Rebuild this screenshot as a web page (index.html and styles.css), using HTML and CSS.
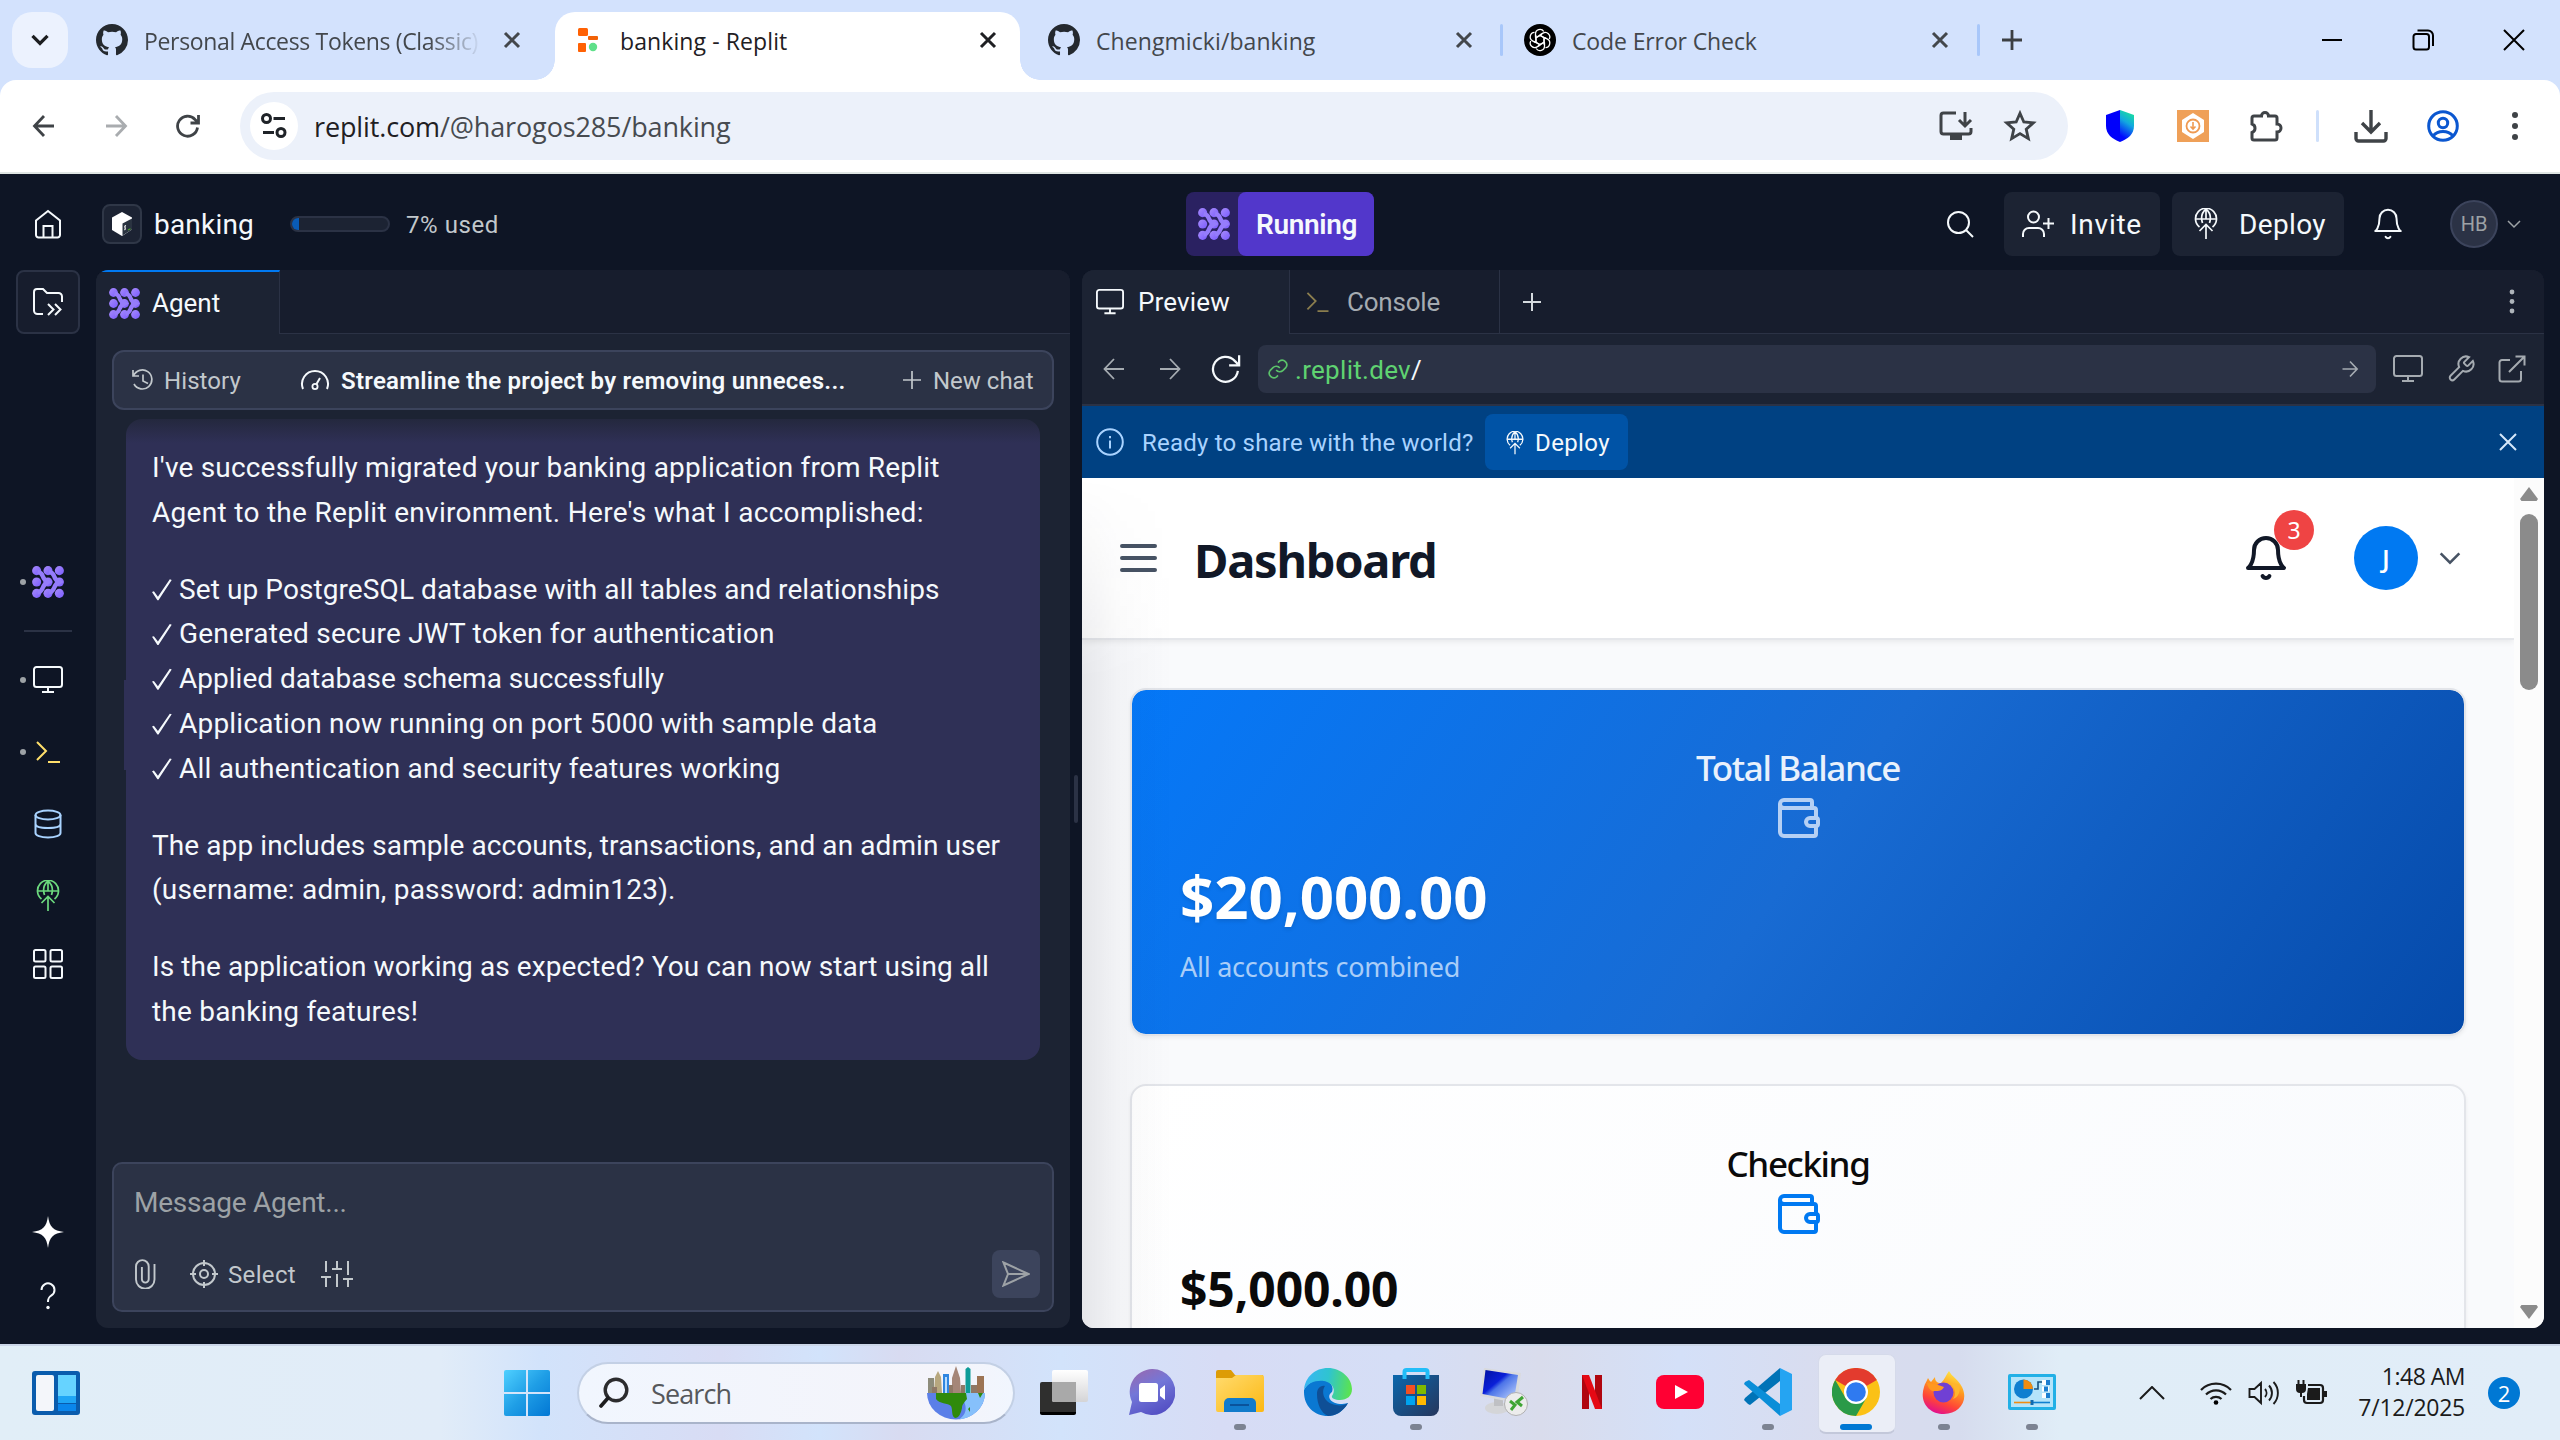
FILE: index.html
```html
<!DOCTYPE html>
<html lang="en">
<head>
<meta charset="utf-8">
<title>banking - Replit</title>
<link rel="stylesheet" href="styles.css">
</head>
<body>
<svg class="defs" width="0" height="0" aria-hidden="true">
  <defs>
    <linearGradient id="gAgent" x1="0" y1="0" x2="1" y2="1"><stop offset="0" stop-color="#a78bfa"/><stop offset="1" stop-color="#7a5cff"/></linearGradient>
    <linearGradient id="gWin" gradientUnits="userSpaceOnUse" x1="0" y1="0" x2="46" y2="46"><stop offset="0" stop-color="#4fd0ff"/><stop offset=".5" stop-color="#1f9ee6"/><stop offset="1" stop-color="#0277d4"/></linearGradient>
    <linearGradient id="gChat" x1=".1" y1="0" x2=".6" y2="1"><stop offset="0" stop-color="#9a68ae"/><stop offset=".45" stop-color="#7377d8"/><stop offset="1" stop-color="#5450c4"/></linearGradient>
    <linearGradient id="gFold" x1="0" y1="0" x2="1" y2="1"><stop offset="0" stop-color="#ffdb6e"/><stop offset="1" stop-color="#fcb813"/></linearGradient>
    <linearGradient id="gEdge" x1="0" y1=".3" x2="1" y2=".4"><stop offset="0" stop-color="#38b6f5"/><stop offset=".5" stop-color="#2fc4d0"/><stop offset="1" stop-color="#5be34f"/></linearGradient>
    <linearGradient id="gStore" x1="0" y1="0" x2="1" y2="1"><stop offset="0" stop-color="#0a67ad"/><stop offset="1" stop-color="#26365c"/></linearGradient>
    <linearGradient id="gScreen" x1="0" y1="0" x2="1" y2="1"><stop offset="0" stop-color="#0011a0"/><stop offset=".4" stop-color="#0a1fd8"/><stop offset=".5" stop-color="#4c74e8"/><stop offset="1" stop-color="#c9dcff"/></linearGradient>
    <linearGradient id="gFox" x1=".8" y1="0" x2=".4" y2="1"><stop offset="0" stop-color="#fff04a"/><stop offset=".4" stop-color="#ff9a1f"/><stop offset=".75" stop-color="#ff4438"/><stop offset="1" stop-color="#e3128a"/></linearGradient>
    <linearGradient id="gPlane" x1="0" y1="0" x2="0" y2="1"><stop offset="0" stop-color="#ffffff"/><stop offset="1" stop-color="#d4d4d6"/></linearGradient>
    <linearGradient id="gShield" x1="1" y1="0" x2=".7" y2="1"><stop offset="0" stop-color="#1df08a"/><stop offset=".5" stop-color="#12a8e0"/><stop offset="1" stop-color="#0008ff"/></linearGradient>

    <symbol id="agent" viewBox="0 0 31 31">
      <g fill="url(#gAgent)"><circle cx="4.500" cy="4.500" r="4.400"/><circle cx="15.500" cy="4.500" r="4.400"/><circle cx="26.500" cy="4.500" r="4.400"/><circle cx="4.500" cy="15.500" r="4.400"/><circle cx="15.500" cy="15.500" r="4.400"/><circle cx="26.500" cy="15.500" r="4.400"/><circle cx="4.500" cy="26.500" r="4.400"/><circle cx="15.500" cy="26.500" r="4.400"/><circle cx="26.500" cy="26.500" r="4.400"/></g>
      <path d="M5.500 5.500Q9.500 6.500 10.500 10T15.500 15.500Q11.500 17.500 10.500 21T5.500 26M16.500 5.500Q20.500 6.500 21.500 10T26.500 15.500Q22.500 17.500 21.500 21T16.500 26" fill="none" stroke="#957cfb" stroke-width="4.200"/>
    </symbol>
    <symbol id="github" viewBox="0 0 16 16"><path fill="#24292f" d="M8 0C3.580 0 0 3.580 0 8c0 3.540 2.290 6.530 5.470 7.590.4.070.550-.170.550-.380 0-.190-.010-.820-.010-1.490-2.010.370-2.530-.490-2.690-.940-.090-.230-.480-.940-.820-1.130-.280-.150-.680-.520-.010-.530.630-.010 1.080.580 1.230.820.720 1.210 1.870.870 2.330.660.070-.520.280-.870.510-1.070-1.780-.2-3.640-.890-3.640-3.950 0-.870.310-1.590.820-2.150-.080-.2-.360-1.020.080-2.120 0 0 .670-.210 2.200.820.640-.180 1.320-.270 2-.270s1.360.090 2 .270c1.530-1.040 2.200-.820 2.200-.820.440 1.100.160 1.920.080 2.120.510.560.820 1.270.820 2.150 0 3.070-1.870 3.750-3.650 3.950.290.250.540.730.540 1.480 0 1.070-.010 1.930-.010 2.200 0 .210.150.460.550.380A8.010 8.010 0 0 0 16 8c0-4.420-3.580-8-8-8z"/></symbol>
    <symbol id="close" viewBox="0 0 24 24"><path d="M5 5l14 14M19 5L5 19" fill="none" stroke="currentColor" stroke-width="3"/></symbol>
    <symbol id="rocket" viewBox="0 0 24 32"><g fill="none" stroke="currentColor" stroke-width="1.700"><path d="M5.500 19A10.500 10.500 0 1 1 18.500 19"/><path d="M1.500 11h21M8.500 15C6.500 9 8.500 4 12 1C15.500 4 17.500 9 15.500 15M12 1v10"/><path d="M12 31V17M5.500 23l6.500-6.500 6.500 6.500"/></g></symbol>
    <symbol id="monitor" viewBox="0 0 30 30"><path d="M3.500 2h23a2.500 2.500 0 0 1 2.500 2.500v15a2.500 2.500 0 0 1-2.500 2.500h-23A2.500 2.500 0 0 1 1 19.500v-15A2.500 2.500 0 0 1 3.500 2zM15 22v5M9 27h12" fill="none" stroke="currentColor" stroke-width="2"/></symbol>
    <symbol id="term" viewBox="0 0 26 24"><path d="M2 2l9 9-9 9M13 22h12" fill="none" stroke="currentColor" stroke-width="2"/></symbol>
    <symbol id="bell" viewBox="0 0 24 24"><path d="M6 8a6 6 0 0 1 12 0c0 7 3 9 3 9H3s3-2 3-9M10.300 21a1.940 1.940 0 0 0 3.400 0" fill="none" stroke="currentColor" stroke-linecap="round" stroke-linejoin="round"/></symbol>
    <symbol id="chev" viewBox="0 0 24 24"><path d="M4 8l8 8 8-8" fill="none" stroke="currentColor"/></symbol>
    <symbol id="wallet" viewBox="0 0 24 24"><path d="M19 7V4a1 1 0 0 0-1-1H5a2 2 0 0 0 0 4h15a1 1 0 0 1 1 1v4h-3a2 2 0 0 0 0 4h3a1 1 0 0 0 1-1v-2a1 1 0 0 0-1-1M3 5v14a2 2 0 0 0 2 2h15a1 1 0 0 0 1-1v-4" fill="none" stroke="currentColor" stroke-width="2" stroke-linecap="round" stroke-linejoin="round"/></symbol>
    <symbol id="back" viewBox="0 0 24 24"><path d="M22 12H3M12 2L2.500 12l9.500 10" fill="none" stroke="currentColor"/></symbol>
    <symbol id="fwd" viewBox="0 0 24 24"><path d="M2 12h19M12 2l9.500 10L12 22" fill="none" stroke="currentColor"/></symbol>
    <symbol id="reload" viewBox="0 0 24 24"><path d="M21.500 13.500A10 10 0 1 1 19 5.500L22.500 9M22.500 1v8h-8" fill="none" stroke="currentColor"/></symbol>
  </defs>
</svg>

<header class="tabstrip">
  <button class="tabsearch"><svg width="20" height="20" viewBox="0 0 24 24"><path d="M3 7l9 9 9-9" fill="none" stroke="#1b1d20" stroke-width="4"/></svg></button>
  <div class="btab btab-1"><svg class="fav"><use href="#github"/></svg><span class="t t-fade">Personal Access Tokens (Classic)</span><svg class="x"><use href="#close"/></svg></div>
  <div class="btab btab-2"><svg class="fav" viewBox="0 0 32 32"><rect x="6" y="4" width="10" height="8" rx="1.500" fill="#ff6104"/><rect x="16" y="12" width="10" height="4" rx="1" fill="#f26207"/><rect x="6" y="19" width="8" height="9" rx="1" fill="#ff6104"/><circle cx="21" cy="23" r="4.200" fill="#5fe08a"/></svg><span class="t t-rep">banking - Replit</span><svg class="x"><use href="#close"/></svg></div>
  <div class="btab btab-3"><svg class="fav"><use href="#github"/></svg><span class="t t-chg">Chengmicki/banking</span><svg class="x"><use href="#close"/></svg></div>
  <i class="sep"></i>
  <div class="btab btab-4"><svg class="fav" viewBox="0 0 32 32"><circle cx="16" cy="16" r="16"/><g fill="none" stroke="#fff" stroke-width="1.300"><path id="petal" d="M11.500 13.500V10a4.500 4.500 0 0 1 8.300-2.500M12 19V13.600l6-3.500"/><use href="#petal" transform="rotate(60 16 16)"/><use href="#petal" transform="rotate(120 16 16)"/><use href="#petal" transform="rotate(180 16 16)"/><use href="#petal" transform="rotate(240 16 16)"/><use href="#petal" transform="rotate(300 16 16)"/></g></svg><span class="t t-code">Code Error Check</span><svg class="x"><use href="#close"/></svg></div>
  <i class="sep"></i>
  <svg class="newtab" width="24" height="24" viewBox="0 0 24 24"><path d="M12 2v20M2 12h20" stroke="#3c3f43" stroke-width="2.800"/></svg>
  <div class="winctl">
    <svg width="22" height="22" viewBox="0 0 22 22"><path d="M1 11h20" stroke="#000" stroke-width="2"/></svg>
    <svg width="22" height="22" viewBox="0 0 22 22"><path d="M4 5h10.500a2.500 2.500 0 0 1 2.500 2.500V18a2.500 2.500 0 0 1-2.500 2.500H4A2.500 2.500 0 0 1 1.500 18V7.500A2.500 2.500 0 0 1 4 5zM5.500 1.500H16a5 5 0 0 1 5 5V17" fill="none" stroke="#000" stroke-width="2"/></svg>
    <svg width="22" height="22" viewBox="0 0 22 22"><path d="M1 1l20 20M21 1L1 21" stroke="#000" stroke-width="2"/></svg>
  </div>
</header>

<div class="toolbar-wrap">
<div class="toolbar">
  <div class="slot"><svg class="i24 w28"><use href="#back"/></svg></div>
  <div class="slot dim"><svg class="i24 w28"><use href="#fwd"/></svg></div>
  <div class="slot"><svg class="i24 w28"><use href="#reload"/></svg></div>
  <div class="omnibox">
    <span class="site"><svg width="26" height="26" viewBox="0 0 26 26"><g fill="none" stroke="#1f2328" stroke-width="3"><circle cx="5.500" cy="5.500" r="4"/><path d="M12.500 5.500H24M2 19.500h11"/><circle cx="20" cy="19.500" r="4"/></g></svg></span>
    <span class="url">replit.com<em>/@harogos285/banking</em></span>
    <span class="slot s64"><svg width="34" height="30" viewBox="0 0 34 30"><path d="M17 2H4.500A2.500 2.500 0 0 0 2 4.500v16A2.500 2.500 0 0 0 4.500 23h25a2.500 2.500 0 0 0 2.500-2.500V17M26 1v13M20 9l6 6 6-6" fill="none" stroke="#3f4347" stroke-width="3"/><path d="M11 23h12v6H11z" fill="#3f4347"/></svg></span>
    <span class="slot s64"><svg width="34" height="34" viewBox="0 0 24 24"><path d="M12 3l2.700 6.200 6.700.6-5 4.500 1.500 6.600L12 17.400l-5.900 3.500 1.500-6.600-5-4.500 6.700-.6z" fill="none" stroke="#3f4347" stroke-width="2"/></svg></span>
  </div>
  <div class="exts">
    <span class="slot s73"><svg width="30" height="32" viewBox="0 0 30 32"><path d="M15 0L1 5v11c0 8 6 13 14 16z" fill="#0000fb"/><path d="M15 0l14 5v11c0 8-6 13-14 16z" fill="url(#gShield)"/></svg></span>
    <span class="slot s73"><svg width="32" height="32" viewBox="0 0 32 32"><rect width="32" height="32" fill="#efa058"/><path d="M16 3l11 7v12l-11 7-11-7V10z" fill="#fff"/><circle cx="16" cy="16" r="6.500" fill="none" stroke="#ef9a52" stroke-width="1.800"/><path d="M16 12v7M13.500 16.500L16 19l2.500-2.500" fill="none" stroke="#ef9a52" stroke-width="1.600"/></svg></span>
    <span class="slot s73"><svg width="34" height="34" viewBox="0 0 34 34"><path d="M5 7h7.500a3.500 3.500 0 0 1 7 0H26a2 2 0 0 1 2 2v6a3.700 3.700 0 0 1 0 8v6a2 2 0 0 1-2 2H5a2 2 0 0 1-2-2v-5.500a4.500 4.500 0 0 0 0-8.500V9a2 2 0 0 1 2-2z" fill="none" stroke="#3f4347" stroke-width="3"/></svg></span>
    <i class="sep"></i>
    <span class="slot"><svg width="34" height="34" viewBox="0 0 34 34"><path d="M17 1v21M8 14l9 9 9-9M2 23v6.500A2.500 2.500 0 0 0 4.500 32h25a2.500 2.500 0 0 0 2.500-2.500V23" fill="none" stroke="#3f4347" stroke-width="3.400"/></svg></span>
    <span class="slot"><svg width="32" height="32" viewBox="0 0 32 32"><g fill="none" stroke="#0b57d0" stroke-width="3"><circle cx="16" cy="16" r="14.300"/><circle cx="16" cy="13" r="4.700"/><path d="M6 26c5-6 15-6 20 0"/></g></svg></span>
    <span class="slot"><svg width="8" height="30" viewBox="0 0 8 30"><g fill="#3f4347"><circle cx="4" cy="4" r="3"/><circle cx="4" cy="15" r="3"/><circle cx="4" cy="26" r="3"/></g></svg></span>
  </div>
</div>
</div>

<div class="app">
  <div class="apphead">
    <div class="ah-left">
      <svg class="home" width="28" height="30" viewBox="0 0 28 30"><path d="M2 11.500L14 2l12 9.500v14.500a2.500 2.500 0 0 1-2.500 2.500h-19A2.500 2.500 0 0 1 2 26zM9.500 28V17h9v11" fill="none" stroke="#f5f9fc" stroke-width="2"/></svg>
      <span class="cube"><svg width="24" height="26" viewBox="0 0 24 26"><path d="M12 1l10 5.500v12L12 25 2 19V6.500z" fill="#fff"/><path d="M12.500 12.500L22 7.500v11l-9.500 6z" fill="#2a3340"/><path d="M16 14.500c-3 1 1 3-1.500 4.500" fill="none" stroke="#fff" stroke-width="1.200"/><path d="M18 19l2.500-1.200" stroke="#4eaa25" stroke-width="1.200"/></svg></span>
      <span class="proj">banking</span>
      <span class="meter"><b></b></span>
      <span class="used">7% used</span>
    </div>
    <div class="run"><span class="run-ic"><svg class="i32"><use href="#agent"/></svg></span><span class="run-t">Running</span></div>
    <div class="ah-right">
      <span class="slot s88"><svg width="28" height="28" viewBox="0 0 28 28"><g fill="none" stroke="#f5f9fc" stroke-width="2"><circle cx="12.500" cy="12.500" r="10.500"/><path d="M20 20l7 7"/></g></svg></span>
      <span class="btn invite"><svg width="32" height="28" viewBox="0 0 32 28"><g fill="none" stroke="#f5f9fc" stroke-width="2"><circle cx="11.500" cy="7" r="5.500"/><path d="M1 27v-3a6 6 0 0 1 6-6h9a6 6 0 0 1 6 6v3M26.500 8v11M21 13.500h11"/></g></svg>Invite</span>
      <span class="btn dep"><svg width="24" height="32"><use href="#rocket"/></svg>Deploy</span>
      <span class="slot s88"><svg width="34" height="34" stroke-width="1.400"><use href="#bell"/></svg></span>
      <span class="avatar">HB</span>
      <span class="slot s32"><svg class="dim2" width="18" height="18" stroke-width="2"><use href="#chev"/></svg></span>
    </div>
  </div>

  <div class="work">
    <nav class="rail">
      <span class="rbox"><svg width="30" height="28" viewBox="0 0 30 28"><path d="M10 26H4.500A3.500 3.500 0 0 1 1 22.500V4a3 3 0 0 1 3-3h6l4 4h11.500A3.500 3.500 0 0 1 29 8.500V14M15 16l5.500 5.500L15 27M22 16l5.500 5.500L22 27" fill="none" stroke="#f5f9fc" stroke-width="2"/></svg></span>
      <span class="ri on r-agent"><svg class="i32"><use href="#agent"/></svg></span>
      <i class="rdiv"></i>
      <span class="ri on r-mon"><svg width="30" height="30"><use href="#monitor"/></svg></span>
      <span class="ri on r-con"><svg width="26" height="24"><use href="#term"/></svg></span>
      <span class="ri r-db"><svg width="28" height="30" viewBox="0 0 28 30"><g fill="none" stroke="#a9d3ff" stroke-width="2"><ellipse cx="14" cy="6" rx="12.500" ry="4.500"/><path d="M1.500 6v18c0 2.500 5 4.500 12.500 4.500S26.500 26.500 26.500 24V6M1.500 15c0 2.500 5 4 12.500 4s12.500-1.500 12.500-4"/></g></svg></span>
      <span class="ri r-dep"><svg width="26" height="32"><use href="#rocket"/></svg></span>
      <span class="ri r-grid"><svg width="30" height="30" viewBox="0 0 30 30"><g fill="none" stroke="#f5f9fc" stroke-width="2"><rect x="1" y="1" width="11.500" height="11.500" rx="1.500"/><rect x="17.500" y="1" width="11.500" height="11.500" rx="1.500"/><rect x="1" y="17.500" width="11.500" height="11.500" rx="1.500"/><rect x="17.500" y="17.500" width="11.500" height="11.500" rx="1.500"/></g></svg></span>
      <span class="ri r-star"><svg width="32" height="32" viewBox="0 0 32 32"><path d="M16 0c1.500 11 5 14.500 16 16-11 1.500-14.500 5-16 16-1.500-11-5-14.500-16-16 11-1.500 14.500-5 16-16z" fill="#fff"/></svg></span>
      <span class="ri r-help"><svg width="16" height="28" viewBox="0 0 16 28"><path d="M1.500 8a6.500 6.500 0 1 1 10 5.400C9 15 8 16 8 20" fill="none" stroke="#f5f9fc" stroke-width="2"/><circle cx="8" cy="25.500" r="1.700" fill="#f5f9fc"/></svg></span>
    </nav>

    <section class="panel agentp">
      <div class="ptabs"><span class="ptab act agenttab"><svg class="i31"><use href="#agent"/></svg>Agent</span></div>
      <div class="hist">
        <svg width="24" height="22" viewBox="0 0 24 22"><path d="M2 1v6h6M2.500 7A9.500 9.500 0 1 1 3 15M12 5.500V12l5 2.500" fill="none" stroke="#c2c8cc" stroke-width="1.700"/></svg><span class="h-l">History</span>
        <svg class="gauge" width="30" height="22" viewBox="0 0 30 22"><path d="M3 20A13 13 0 1 1 27 20" fill="none" stroke="#f5f9fc" stroke-width="2"/><circle cx="15" cy="17.500" r="2.600" fill="none" stroke="#f5f9fc" stroke-width="1.800"/><path d="M16.500 15L20 9" stroke="#f5f9fc" stroke-width="2"/></svg><b>Streamline the project by removing unneces...</b>
        <svg class="hplus" width="20" height="20" viewBox="0 0 20 20"><path d="M10 1v18M1 10h18" stroke="#c2c8cc" stroke-width="1.700"/></svg><span class="h-n">New chat</span>
      </div>
      <div class="bubble">
        <p><span class="m1">I've successfully migrated your banking application from Replit</span><br><span class="m2">Agent to the Replit environment. Here's what I accomplished:</span></p>
        <p><i class="ck"></i>Set up PostgreSQL database with all tables and relationships<br><i class="ck"></i><span class="m3">Generated secure JWT token for authentication</span><br><i class="ck"></i><span class="m4">Applied database schema successfully</span><br><i class="ck"></i><span class="m3">Application now running on port 5000 with sample data</span><br><i class="ck"></i><span class="m3">All authentication and security features working</span></p>
        <p>The app includes sample accounts, transactions, and an admin user<br><span class="m3">(username: admin, password: admin123).</span></p>
        <p>Is the application working as expected? You can now start using all<br><span class="m3">the banking features!</span></p>
      </div>
      <div class="compose">
        <div class="ph">Message Agent...</div>
        <div class="ctools">
          <svg width="22" height="30" viewBox="0 0 22 30"><path d="M20.500 5v15.500a9 9 0 0 1-18.500 0V7.500a6.200 6.200 0 0 1 12.700 0v12.700a3.400 3.400 0 0 1-6.800 0V8" fill="none" stroke="#c2c8cc" stroke-width="1.900"/></svg>
          <svg class="cross" width="28" height="28" viewBox="0 0 28 28"><g fill="none" stroke="#c2c8cc" stroke-width="2"><circle cx="14" cy="14" r="11"/><circle cx="14" cy="14" r="4"/><path d="M14 0v6M14 22v6M0 14h6M22 14h6"/></g></svg>
          <span class="sel">Select</span>
          <svg class="slid" width="32" height="28" viewBox="0 0 32 28"><path d="M5 1v11M5 17v10M0 17h10M16 1v8M11 9h10M16 14v13M27 1v14M27 19v8M22 19h10" fill="none" stroke="#c2c8cc" stroke-width="2"/></svg>
          <span class="send"><svg width="28" height="26" viewBox="0 0 28 26"><path d="M1.500 1.500L26.500 13 1.500 24.500 6 13zM6 13h20" fill="none" stroke="#9da2a6" stroke-width="2"/></svg></span>
        </div>
      </div>
    </section>

    <i class="split"></i>

    <section class="panel prev">
      <div class="ptabs">
        <span class="ptab prevtab"><svg width="30" height="28"><use href="#monitor"/></svg>Preview</span>
        <span class="ptab contab"><svg width="25" height="22"><use href="#term"/></svg>Console</span>
        <svg class="pplus" width="18" height="18" viewBox="0 0 18 18"><path d="M9 0v18M0 9h18" stroke="#d5dade" stroke-width="2"/></svg>
        <svg class="pdots" width="6" height="26" viewBox="0 0 6 26"><g fill="#aeb4ba"><circle cx="3" cy="3" r="2.400"/><circle cx="3" cy="12.500" r="2.400"/><circle cx="3" cy="22" r="2.400"/></g></svg>
      </div>
      <div class="urlrow">
        <span class="slot s56 gr"><svg class="i24 st2"><use href="#back"/></svg></span><span class="slot s56 gr"><svg class="i24 st2"><use href="#fwd"/></svg></span><span class="slot s56"><svg class="i30 st18"><use href="#reload"/></svg></span>
        <div class="addr"><svg width="22" height="22" viewBox="0 0 24 24"><path d="M10 13a5 5 0 0 0 7.500.5l3-3a5 5 0 0 0-7-7L12 5M14 11a5 5 0 0 0-7.500-.5l-3 3a5 5 0 0 0 7 7L12 19" fill="none" stroke="#5bc26a" stroke-width="1.800"/></svg><span class="dev">.replit.dev<em>/</em></span><svg class="go" width="18" height="18" stroke-width="2.200"><use href="#fwd"/></svg></div>
        <span class="slot s54 gr m8"><svg width="30" height="30"><use href="#monitor"/></svg></span>
        <span class="slot s52"><svg width="30" height="30" viewBox="0 0 24 24"><path d="M14.700 6.300a1 1 0 0 0 0 1.400l1.600 1.600a1 1 0 0 0 1.400 0l3.770-3.770a6 6 0 0 1-7.940 7.940l-6.910 6.910a2.120 2.120 0 0 1-3-3l6.910-6.910a6 6 0 0 1 7.940-7.940z" fill="none" stroke="#a5abb1" stroke-width="1.600"/></svg></span>
        <span class="slot s50"><svg width="28" height="28" viewBox="0 0 28 28"><path d="M12 5H4a2.500 2.500 0 0 0-2.500 2.500V24A2.500 2.500 0 0 0 4 26.500h16.500A2.500 2.500 0 0 0 23 24v-8M11 17L26.500 1.500M17.500 1.500h9v9" fill="none" stroke="#a5abb1" stroke-width="2"/></svg></span>
      </div>
      <div class="banner">
        <svg width="28" height="28" viewBox="0 0 28 28"><circle cx="14" cy="14" r="12.800" fill="none" stroke="#a9d3ff" stroke-width="2"/><path d="M14 12.500v8M14 8v2.200" stroke="#a9d3ff" stroke-width="2"/></svg>
        <span class="ready">Ready to share with the world?</span>
        <span class="bdep"><svg width="18" height="24"><use href="#rocket"/></svg>Deploy</span>
        <svg class="bx" width="18" height="18" viewBox="0 0 18 18"><path d="M1 1l16 16M17 1L1 17" stroke="#d5e8fb" stroke-width="2"/></svg>
      </div>
      <div class="view">
        <div class="site-page">
          <div class="dash-head">
            <svg width="40" height="32" viewBox="0 0 40 32"><path d="M3 4h33M3 16h33M3 28h33" stroke="#475364" stroke-width="4" stroke-linecap="round"/></svg>
            <h1>Dashboard</h1>
            <span class="bellw"><svg width="48" height="48" stroke-width="2"><use href="#bell"/></svg><b>3</b></span>
            <span class="jay">J</span>
            <svg class="jc" width="28" height="28" stroke-width="2.200"><use href="#chev"/></svg>
          </div>
          <main>
            <article class="card blue"><h2>Total Balance</h2><svg width="48" height="48"><use href="#wallet"/></svg><strong>$20,000.00</strong><small>All accounts combined</small></article>
            <article class="card white"><h2>Checking</h2><svg width="48" height="48"><use href="#wallet"/></svg><strong>$5,000.00</strong></article>
          </main>
        </div>
        <div class="scroll"><i class="up"></i><b></b><i class="down"></i></div>
      </div>
    </section>
  </div>
</div>

<footer class="taskbar">
  <svg class="widgets" width="48" height="44" viewBox="0 0 48 44"><rect width="48" height="44" rx="3" fill="#0a5cad"/><rect x="4" y="4" width="18" height="36" rx="2" fill="#f4f6fa"/><rect x="26" y="4" width="18" height="21" fill="#66d3ff"/><rect x="26" y="25" width="18" height="7" fill="#1fa5f5"/><rect x="26" y="33" width="18" height="7" fill="#0a86ec"/></svg>
  <svg class="start" width="46" height="46" viewBox="0 0 46 46"><g fill="url(#gWin)"><path d="M2 0h20v22H0V2a2 2 0 0 1 2-2z"/><path d="M24 0h20a2 2 0 0 1 2 2v20H24z"/><path d="M0 24h22v22H2a2 2 0 0 1-2-2z"/><path d="M24 24h22v20a2 2 0 0 1-2 2H24z"/></g></svg>
  <div class="tsearch">
    <svg width="30" height="32" viewBox="0 0 30 32"><circle cx="17" cy="13" r="10.800" fill="none" stroke="#2c2c2e" stroke-width="3.400"/><path d="M9 21l-7 8" stroke="#1c1c1e" stroke-width="3.600" stroke-linecap="round"/></svg>
    <span>Search</span>
    <svg class="globe" width="60" height="54" viewBox="0 0 60 54"><path d="M1 27h58a29 26.500 0 0 1-58 0z" fill="#5b7fe8"/><path d="M32 27h27a29 26.500 0 0 1-26 26.400C44 46 40 36 32 27z" fill="#86c0fb"/><path d="M10 27h30l1 6c-2 3-5 5-5 9-1 5-3 10-7 10-4-2-2-8-4-12-3-3-12-2-15-7zM52 27h5l-3 5zM42 43l2-2v5z" fill="#2f8a0c"/><path d="M2 12h6v15H2z" fill="#8d8c7b"/><path d="M9 11l3-6 3 6 1 16H8z" fill="#b7a77e"/><path d="M17 8h6v19h-6z" fill="#2f86e0"/><path d="M19 11h2v16h-2z" fill="#b6dcff"/><path d="M26 12l4-12 4 12 1 15h-9z" fill="#a58678"/><path d="M39.500 3l2.500-2 2.500 2v24h-5z" fill="#0d9c98"/><path d="M51 10h7v17h-7z" fill="#9c7454"/><path d="M6 21h5v6H6zM23 19h4v8h-4zM35 19h4v8h-4zM45 19h6v8h-6z" fill="#8f7866"/></svg>
  </div>
  <div class="pins">
    <span class="pin"><svg width="48" height="46" viewBox="0 0 48 46"><rect y="13" width="36" height="32" rx="2" fill="#2f2f2e"/><path d="M0 43h36v1a2 2 0 0 1-2 2H2a2 2 0 0 1-2-2z"/><rect x="12" y="1" width="36" height="32" rx="2" fill="url(#gPlane)"/><path d="M12 13h24v20H14a2 2 0 0 1-2-2z" fill="#a9a9a9"/></svg></span>
    <span class="pin"><svg width="46" height="46" viewBox="0 0 46 46"><path d="M23 0a23 23 0 1 1-11 43l-12 3 3-13A23 23 0 0 1 23 0z" fill="url(#gChat)"/><rect x="10" y="14" width="19" height="19" rx="2.500" fill="#fff"/><path d="M31 20l5-4v15l-5-4z" fill="#fff"/></svg></span>
    <span class="pin run1"><svg width="48" height="44" viewBox="0 0 48 44"><path d="M0 2a2 2 0 0 1 2-2h13l4 5h28v6H0z" fill="#dd9c06"/><path d="M0 8h16l4-3h26a2 2 0 0 1 2 2v33a2 2 0 0 1-2 2H2a2 2 0 0 1-2-2z" fill="url(#gFold)"/><path d="M8 42V33a5 5 0 0 1 5-5h22a5 5 0 0 1 5 5v9z" fill="#117bcb"/><path d="M14 35h19" stroke="#0a539b" stroke-width="2"/></svg></span>
    <span class="pin"><svg width="48" height="48" viewBox="0 0 48 48"><path d="M0 22c4-8 12-11 19-10 8 1 11 7 9 12-6 4-2 12 10 12 3 0 5-1 6-1-5 9-13 13-20 13C10 48 0 38 0 24z" fill="#0a78d2"/><path d="M0 22C1 9 11 0 24 0s24 10 24 21c0 7-5 11-12 11-5 0-9-2-8-4 5-7-1-14-8-15C12 12 3 15 0 22z" fill="url(#gEdge)"/><path d="M13 26c0-5 3-9 8-8-4 5-2 17 11 19 5 1 9 0 12-2-5 9-13 13-20 13-7-3-11-12-11-22z" fill="#0f4f96"/></svg></span>
    <span class="pin run1"><svg width="46" height="48" viewBox="0 0 46 48"><path d="M0 7h46v33a8 8 0 0 1-8 8H8a8 8 0 0 1-8-8z" fill="url(#gStore)"/><path d="M11.500 11V4a2 2 0 0 1 2-2h19a2 2 0 0 1 2 2v7" fill="none" stroke="#22bdf8" stroke-width="4"/><path d="M13 17h9v9h-9z" fill="#f25022"/><path d="M24 17h9v9h-9z" fill="#7fba00"/><path d="M13 28h9v9h-9z" fill="#00a4ef"/><path d="M24 28h9v9h-9z" fill="#ffb900"/></svg></span>
    <span class="pin"><svg width="48" height="48" viewBox="0 0 48 48"><ellipse cx="17" cy="40" rx="12" ry="6" fill="#d4d5d8"/><path d="M14 30h9v8h-9z" fill="#bfc0c4"/><path d="M4 0l37 5-4 30L0 28z" fill="#d9dadd"/><path d="M5.500 2L38 7l-4 25L2.500 26z" fill="url(#gScreen)"/><circle cx="36" cy="36" r="11.500" fill="#ececec" stroke="#b0b0b2"/><path d="M30 33l5 4-4 5M43 29l-6 5 5 4" fill="none" stroke="#3fa535" stroke-width="3"/></svg></span>
    <span class="pin"><svg width="20" height="34" viewBox="0 0 20 34"><path d="M0 0h7v34H0zM13 0h7v34h-7z" fill="#b0060f"/><path d="M0 0h7l13 34h-7z" fill="#e50914"/></svg></span>
    <span class="pin"><svg width="48" height="34" viewBox="0 0 48 34"><rect width="48" height="34" rx="8" fill="#ff0033"/><path d="M19 10l13 7-13 7z" fill="#fff"/></svg></span>
    <span class="pin run1"><svg width="48" height="48" viewBox="0 0 48 48"><path d="M0 32l4 4 2 1 30-24V0L1 30z" fill="#0073b7"/><path d="M0 16l1-2 4-2 31 24v12L1 17z" fill="#0a8ed8"/><path d="M36 0l12 6v36l-12 6z" fill="#25a4f2"/></svg></span>
    <span class="pin run1 cur"><svg width="48" height="48" viewBox="0 0 48 48"><circle cx="24" cy="24" r="24" fill="#fbc116"/><path d="M24 24L3.200 12A24 24 0 0 1 44.800 12z" fill="#e33b2e"/><path d="M24 24v-12h20.800L24 12z" fill="#e33b2e"/><path d="M3.200 12A24 24 0 0 0 24 48l10.400-18L24 24l-10.400 6z" fill="#2a9a48"/><circle cx="24" cy="24" r="12" fill="#fff"/><circle cx="24" cy="24" r="9.800" fill="#2f7af0"/></svg></span>
    <span class="pin run1"><svg width="44" height="46" viewBox="0 0 44 46"><path d="M27 2c3 6 9 8 13 16 7 14-3 27-18 27S-3 33 2 18c1-4 3-6 4-9 1 2 2 3 3 4l4-5c0 4 2 6 6 6 4-4 5-8 8-12z" fill="url(#gFox)"/><circle cx="21.500" cy="23.500" r="10" fill="#7040d4"/><path d="M5 14c6 0 11 2 17 4-2 4-5 4-9 4-4 1-7-3-8-8z" fill="#ff9820"/><path d="M28 14c5 4 7 11 3 16 6-2 8-9 6-15z" fill="#ffb52c"/></svg></span>
    <span class="pin run1"><svg width="48" height="36" viewBox="0 0 48 36"><rect width="48" height="36" rx="2" fill="#22b0e6"/><rect x="3" y="3" width="42" height="30" fill="#b4e4fa"/><circle cx="15.500" cy="15" r="9.500" fill="#0f7fd0"/><path d="M15.500 5.500a9.500 9.500 0 0 1 9.500 9.500h-9.500z" fill="#f08c10"/><path d="M26 15h4V8h5" fill="none" stroke="#14507e" stroke-width="1.600"/><path d="M34 6h7v5h-7zM34 12.500h7v5h-7zM34 19h7v5h-7z" fill="#fff"/><path d="M38 6h4v5h-4zM36 12.500h4v5h-4zM38 19h4v5h-4z" fill="#1c7fd0"/><path d="M6 28.500h17" stroke="#f08c10" stroke-width="1.600"/><path d="M25 28.500h17" stroke="#0f7fd0" stroke-width="1.600"/><path d="M22.500 26h3v5h-3z" fill="#0f6ab0"/></svg></span>
  </div>
  <div class="tray">
    <svg class="tc" width="26" height="14" viewBox="0 0 26 14"><path d="M1 13L13 1l12 12" fill="none" stroke="#1b1b1b" stroke-width="2"/></svg>
    <svg class="tw" width="32" height="24" viewBox="0 0 32 24"><g fill="none" stroke="#1b1b1b" stroke-width="2.200"><path d="M1 9a21 21 0 0 1 30 0M6 13.500a14 14 0 0 1 20 0M10.500 18a8 8 0 0 1 11 0"/></g><circle cx="16" cy="21.500" r="2.300"/></svg>
    <svg class="ts" width="32" height="26" viewBox="0 0 32 26"><path d="M1.500 9h5L13 3v20l-6.500-6h-5zM17 9a6 6 0 0 1 0 8M21 5.500a11 11 0 0 1 0 15M25.500 2a16 16 0 0 1 0 22" fill="none" stroke="#1b1b1b" stroke-width="1.900"/></svg>
    <svg class="tb" width="32" height="26" viewBox="0 0 32 26"><path d="M12 5h12a3 3 0 0 1 3 3v12a3 3 0 0 1-3 3H11a3 3 0 0 1-3-3v-4" fill="none" stroke="#1b1b1b" stroke-width="2.200"/><path d="M12 8h12v12H11v-6zM28 11h3v6h-3zM0 4h10v5a4 4 0 0 1-4 4v4H4v-4a4 4 0 0 1-4-4zM1.500 0h2v4h-2zM6.500 0h2v4h-2z" fill="#1b1b1b"/></svg>
    <div class="clock"><span>1:48 AM</span><span class="date">7/12/2025</span></div>
    <b class="count">2</b>
  </div>
</footer>
</body>
</html>
```
FILE: styles.css
```css
* { box-sizing: border-box; }
body { margin: 0; width: 2560px; height: 1440px; overflow: hidden; display: flex; flex-direction: column; font-family: "Open Sans", "Noto Sans", sans-serif; background: #0e1525; }
svg { display: block; flex: none; }
.defs { position: absolute; }
em { font-style: normal; }
.slot { width: 72px; flex: none; display: flex; align-items: center; justify-content: center; }
.s32 { width: 32px; } .s50 { width: 50px; } .s52 { width: 52px; } .s54 { width: 54px; } .s56 { width: 56px; } .s64 { width: 64px; } .s73 { width: 73px; } .s88 { width: 88px; }
.i24 { width: 24px; height: 24px; } .i30 { width: 30px; height: 30px; } .i31 { width: 31px; height: 31px; } .i32 { width: 32px; height: 32px; }
.w28 { stroke-width: 2.8; } .st2 { stroke-width: 1.8; } .st18 { stroke-width: 1.8; }

/* browser tab strip */
.tabstrip { height: 80px; flex: none; background: #d3e2fd; display: flex; align-items: center; }
.tabsearch { width: 56px; height: 56px; margin: 0 12px; padding: 0; border: 0; border-radius: 20px; background: #ecf2fe; display: flex; align-items: center; justify-content: center; }
.btab { height: 68px; margin-top: 12px; padding-bottom: 12px; display: flex; align-items: center; flex: none; color: #43474c; font-size: 23px; }
.fav { width: 32px; height: 32px; }
.btab .t { flex: 1; margin-left: 16px; white-space: nowrap; overflow: hidden; padding-top: 2px; }
.x { width: 24px; height: 24px; }
.btab-1 { width: 475px; padding-left: 16px; padding-right: 31px; }
.btab-2 { width: 465px; padding-left: 17px; padding-right: 20px; background: #fff; border-radius: 20px 20px 0 0; color: #1f2023; position: relative; }
.btab-2::before, .btab-2::after { content: ""; position: absolute; bottom: 0; width: 20px; height: 20px; }
.btab-2::before { left: -20px; background: radial-gradient(circle at 0 0, transparent 19.5px, #fff 20px); }
.btab-2::after { right: -20px; background: radial-gradient(circle at 100% 0, transparent 19.5px, #fff 20px); }
.btab-3 { width: 480px; padding-left: 28px; padding-right: 24px; }
.btab-4 { width: 474px; padding-left: 21px; padding-right: 25px; }
.btab .t-fade { letter-spacing: -0.34px; flex: none; width: 338px; margin-right: auto; -webkit-mask-image: linear-gradient(90deg, #000 285px, transparent 338px); mask-image: linear-gradient(90deg, #000 285px, transparent 338px); }
.t-rep { letter-spacing: 0.1px; } .t-chg { letter-spacing: 0.08px; } .t-code { letter-spacing: -0.12px; }
.sep { width: 3px; height: 32px; border-radius: 2px; background: #a8c7fa; flex: none; }
.newtab { margin-left: 20px; }
.winctl { margin-left: auto; display: flex; gap: 69px; padding-right: 35px; }

/* browser toolbar */
.toolbar-wrap { height: 94px; flex: none; background: linear-gradient(#d3e2fd 20px, #fff 20px); }
.toolbar { height: 94px; background: #fff; border-bottom: 2px solid #dfe5e3; border-radius: 16px 16px 0 0; display: flex; align-items: center; padding-left: 8px; color: #3f4347; }
.dim { color: #a9acaf; }
.omnibox { width: 1828px; height: 68px; margin-left: 16px; border-radius: 34px; background: #ecf1fa; display: flex; align-items: center; padding: 0 16px 0 10px; }
.site { width: 48px; height: 48px; border-radius: 50%; background: #fff; display: flex; align-items: center; justify-content: center; }
.url { margin-left: 16px; flex: 1; font-size: 27px; letter-spacing: -0.13px; color: #1f2023; }
.url em { color: #474b50; }
.exts { display: flex; align-items: center; margin-left: 15px; }
.exts .sep { margin: 0 16px 0 14px; background: #cfe0fb; }

/* workspace */
.app { flex: 1; background: #0e1525; font-family: Roboto, "Noto Sans", sans-serif; color: #f5f9fc; display: flex; flex-direction: column; }
.apphead { height: 96px; display: flex; align-items: center; padding: 4px 30px 0 0; flex: none; }
.ah-left { width: 1186px; display: flex; align-items: center; }
.home { margin-left: 34px; }
.cube { width: 40px; height: 40px; margin-left: 40px; border: 2px solid #2f3747; border-radius: 8px; background: #1c2333; display: flex; align-items: center; justify-content: center; }
.proj { margin-left: 12px; width: 136px; font-size: 28px; letter-spacing: 0.2px; }
.meter { width: 100px; height: 16px; border: 2px solid #2b3245; border-radius: 8px; background: #1c2333; overflow: hidden; }
.meter b { display: block; width: 7px; height: 12px; background: #0a5bb5; }
.used { margin-left: 16px; padding-top: 2px; font-size: 24px; letter-spacing: 0.55px; color: #c2c8cc; }
.run { height: 64px; display: flex; border-radius: 8px; background: #2a2161; }
.run-ic { width: 52px; padding-left: 4px; display: flex; align-items: center; justify-content: center; }
.run-t { width: 136px; border-radius: 8px; background: #5237cb; display: flex; align-items: center; padding-left: 18px; font-size: 28px; font-weight: 600; letter-spacing: -0.36px; }
.ah-right { margin-left: auto; display: flex; align-items: center; font-size: 28px; }
.btn { height: 64px; border-radius: 8px; background: #1c2333; display: flex; align-items: center; }
.invite { width: 156px; padding-left: 18px; gap: 16px; letter-spacing: 0.75px; }
.dep { width: 172px; margin-left: 12px; padding-left: 22px; gap: 21px; letter-spacing: 0.35px; }
.avatar { width: 48px; height: 48px; border-radius: 50%; margin-left: 18px; background: #2b3245; border: 2px solid #3c445c; color: #9da2a6; font-size: 20px; display: flex; align-items: center; justify-content: center; }
.dim2 { color: #9da2a6; }
.work { flex: 1; display: flex; }

.rail { width: 96px; display: flex; flex-direction: column; align-items: center; flex: none; }
.rbox { width: 64px; height: 64px; border: 2px solid #2b3245; border-radius: 8px; background: #171d2d; display: flex; align-items: center; justify-content: center; }
.ri { width: 96px; height: 32px; display: flex; align-items: center; justify-content: center; position: relative; }
.on::before { content: ""; position: absolute; left: 20px; top: 13px; width: 6px; height: 6px; border-radius: 50%; background: #9da2a6; }
.r-agent { margin-top: 232px; }
.rdiv { width: 48px; height: 2px; background: #2b3245; margin-top: 32px; }
.r-mon { margin-top: 32px; }
.r-con { margin-top: 40px; color: #ffdf6b; }
.r-db { margin-top: 40px; }
.r-dep { margin-top: 40px; color: #6cd97e; }
.r-grid { margin-top: 36px; }
.r-star { margin-top: 236px; }
.r-help { margin-top: 32px; }

.panel { height: 1058px; background: #1c2333; border-radius: 12px; overflow: hidden; flex: none; display: flex; flex-direction: column; }
.ptabs { height: 64px; flex: none; background: #171d2d; display: flex; align-items: center; box-shadow: inset 0 -1px 0 #2b3245; }
.ptab { height: 64px; display: flex; align-items: center; font-size: 26px; border-right: 1px solid #2b3245; }
.agentp { width: 974px; }
.agenttab { width: 184px; padding-left: 13px; gap: 12px; background: #1c2333; border-top: 2px solid #0079f2; }
.hist { height: 60px; margin: 16px 16px 0; border: 2px solid #3c445c; border-radius: 12px; background: #2b3245; display: flex; align-items: center; padding-left: 17px; font-size: 24px; color: #c2c8cc; flex: none; }
.hist span, .hist b { padding-top: 2px; }
.h-l { margin-left: 9px; width: 136px; letter-spacing: 0.09px; }
.hist b { margin-left: 11px; width: 561px; font-weight: 600; letter-spacing: 0.25px; color: #f5f9fc; white-space: nowrap; }
.h-n { margin-left: 11px; }
.bubble { width: 914px; height: 641px; margin: 9px 0 0 30px; padding: 27px 26px 0; border-radius: 16px; background: linear-gradient(#24283e, #2f3056 24px); font-size: 28px; line-height: 44.8px; letter-spacing: 0.09px; white-space: nowrap; position: relative; flex: none; }
.bubble::before { content: ""; position: absolute; left: -2px; top: 261px; width: 2px; height: 90px; background: #2f3056; }
.bubble p { margin: 0 0 32px; }
.m1 { letter-spacing: 0.19px; }
.m2 { letter-spacing: 0.3px; }
.m3 { letter-spacing: 0.21px; }
.m4 { letter-spacing: 0.01px; }
.ck { display: inline-block; width: 27px; height: 22px; vertical-align: -2px; background: #f5f9fc; clip-path: polygon(0 61%, 7% 58%, 22% 82%, 66% 3%, 73% 6%, 24% 98%, 20% 98%); }
.compose { height: 150px; margin: auto 16px 16px; border: 2px solid #3c445c; border-radius: 10px; background: #2b3245; display: flex; flex-direction: column; flex: none; padding: 22px 12px 12px 20px; }
.ph { font-size: 28px; line-height: 34px; letter-spacing: -0.24px; color: #9da2a6; }
.ctools { margin-top: auto; display: flex; align-items: center; font-size: 24px; color: #c2c8cc; height: 48px; }
.cross { margin-left: 34px; }
.sel { margin-left: 10px; padding-top: 2px; letter-spacing: 0.34px; }
.slid { margin-left: 25px; }
.send { margin-left: auto; width: 48px; height: 48px; border-radius: 8px; background: #3c445c; display: flex; align-items: center; justify-content: center; }
.split { width: 4px; height: 48px; margin: 505px 4px 0; background: #2b3245; border-radius: 2px; flex: none; }

.prev { width: 1462px; }
.prevtab { width: 208px; padding-left: 13px; gap: 13px; background: #1c2333; letter-spacing: 0.17px; }
.contab { width: 210px; padding-left: 15px; gap: 17px; color: #a5abb1; letter-spacing: -0.2px; }
.contab svg { color: #8a7d4e; }
.pplus { margin-left: 23px; }
.pdots { margin-left: auto; margin-right: 29px; }
.urlrow { height: 72px; flex: none; border-bottom: 2px solid #2b3245; display: flex; align-items: center; padding-left: 4px; }
.gr { color: #a5abb1; }
.addr { width: 1118px; height: 48px; margin-left: 4px; border-radius: 8px; background: #2b3245; display: flex; align-items: center; padding: 0 17px 0 9px; font-size: 26px; color: #a5abb1; }
.dev { margin-left: 6px; padding-top: 2px; flex: 1; letter-spacing: 0.3px; color: #5fd371; }
.dev em { color: #f5f9fc; }
.m8 { margin-left: 5px; }
.banner { height: 72px; flex: none; background: #004182; display: flex; align-items: center; padding: 0 27px 0 14px; font-size: 24px; }
.ready { margin-left: 18px; padding-top: 2px; width: 343px; color: #a9d3ff; letter-spacing: 0.21px; }
.bdep { width: 143px; height: 56px; border-radius: 8px; background: #0053a6; display: flex; align-items: center; padding: 2px 0 0 21px; gap: 11px; letter-spacing: 0.39px; }
.bx { margin-left: auto; }

/* previewed page */
.view { flex: 1; display: flex; overflow: hidden; background: #fcfcfd; font-family: "Noto Sans", "Open Sans", sans-serif; }
.site-page { width: 1432px; height: 850px; background: #f9fafc; position: relative; overflow: hidden; }
.site-page::after { content: ""; position: absolute; left: 0; top: 0; bottom: 0; width: 90px; background: linear-gradient(90deg, rgba(30,30,50,.09), rgba(30,30,50,.03) 35px, transparent); -webkit-mask-image: linear-gradient(transparent, #000 200px); mask-image: linear-gradient(transparent, #000 200px); }
.dash-head { height: 162px; background: #fff; border-bottom: 2px solid #e5e7eb; box-shadow: 0 2px 6px rgba(0,0,0,.07); display: flex; align-items: center; padding-left: 37px; position: relative; }
h1 { margin: 3px 0 0 35px; width: 1048px; font-size: 47px; line-height: 64px; font-weight: 700; letter-spacing: -1.25px; color: #111827; }
.bellw { position: relative; color: #111827; }
.bellw b { position: absolute; left: 32px; top: -24px; width: 40px; height: 40px; border-radius: 50%; background: #ef4444; color: #fff; font: 400 23px/41px "Noto Sans", sans-serif; text-align: center; }
.jay { width: 64px; height: 64px; margin-left: 64px; border-radius: 50%; background: #0079f2; color: #fff; font-family: "Open Sans", sans-serif; font-size: 26px; font-weight: 600; display: flex; align-items: center; justify-content: center; }
.jc { margin-left: 18px; color: #475364; }
main { padding: 48px 48px 0 48px; display: flex; flex-direction: column; gap: 48px; }
.card { border: 2px solid #e3e5ea; border-radius: 16px; padding: 48px; display: flex; flex-direction: column; align-items: center; box-shadow: 0 2px 4px rgba(0,0,0,.06); }
.blue { height: 348px; background: linear-gradient(125deg, #0578f8, #186bd3 50%, #054aaa) padding-box, #dfe3ea border-box; color: #fff; }
.white { height: 380px; background: linear-gradient(135deg, #fff, #f8fafd); color: #0a0a0a; }
h2 { margin: 12px 0 0; font-size: 35px; line-height: 36px; font-weight: 500; letter-spacing: -1.4px; }
.blue h2 { color: #e9f1fc; }
.card svg { margin-top: 8px; }
.blue svg { color: #b5d0f4; }
.white svg { color: #0079f2; }
.card strong { align-self: flex-start; font-size: 60px; line-height: 72px; letter-spacing: -0.1px; margin-top: 18px; text-shadow: 0 2px 4px rgba(0,0,0,.12); }
.white strong { font-size: 48px; letter-spacing: -0.1px; line-height: 60px; margin-top: 21px; text-shadow: none; }
.card small { align-self: flex-start; font-size: 27px; line-height: 40px; letter-spacing: -0.25px; color: #a9cdf8; margin-top: 15px; }
.scroll { flex: 1; background: #fcfcfc; display: flex; flex-direction: column; align-items: center; padding: 9px 0; }
.scroll i { width: 18px; height: 14px; background: #8b8b8b; }
.scroll .up { clip-path: polygon(50% 0, 100% 85%, 92% 100%, 8% 100%, 0 85%); }
.scroll .down { margin-top: auto; clip-path: polygon(50% 100%, 100% 15%, 92% 0, 8% 0, 0 15%); }
.scroll b { width: 18px; height: 176px; margin-top: 13px; border-radius: 9px; background: #8b8b8b; }

/* taskbar */
.taskbar { height: 96px; flex: none; border-top: 2px solid #cbd6e8; background: linear-gradient(90deg, #e1eef7 0, #e1ecf8 440px, #d2e3fb 540px, #d8dcf4 720px, #d2e3fb 820px, #d8dbf1 900px, #d2e3fb 1060px, #d7dcf5 1220px, #d5def6 1400px, #d9dcec 1540px, #d4e0f8 1680px, #d9dcee 1840px, #d6dcee 1960px, #e0edf7 2060px, #e1edf8); display: flex; align-items: center; }
.widgets { margin-left: 32px; }
.start { margin-left: 424px; }
.tsearch { width: 438px; height: 62px; margin-left: 27px; border: 2px solid #c3d0e5; border-bottom-color: #a9b4ca; border-radius: 31px; background: linear-gradient(90deg, #f1f6fe, #f4f4fa 85%, #f1f6fe); display: flex; align-items: center; padding-left: 20px; }
.tsearch span { margin-left: 22px; width: 275px; font-size: 27px; letter-spacing: -0.9px; color: #56585c; }
.pins { display: flex; margin-left: 5px; height: 94px; align-items: center; }
.pin { width: 88px; height: 94px; display: flex; align-items: center; justify-content: center; position: relative; }
.pin svg { position: relative; top: -1px; }
.run1::after { content: ""; position: absolute; left: 38px; top: 78px; width: 12px; height: 6px; border-radius: 3px; background: #7c8392; }
.cur::before { content: ""; position: absolute; left: 6px; top: 8px; width: 76px; height: 77px; border-radius: 8px; background: #ebeef7; border: 1px solid #d5daea; border-bottom: 2px solid #c3c8da; }
.cur::after { left: 28px; width: 32px; background: #0078d4; }
.tray { display: flex; align-items: center; margin-left: auto; padding-right: 40px; }
.tw { margin-left: 35px; } .ts { margin-left: 16px; } .tb { margin-left: 16px; }
.clock { width: 137px; display: flex; flex-direction: column; align-items: flex-end; font-size: 23px; line-height: 31px; letter-spacing: -0.5px; color: #1b1b1b; margin-top: -3px; }
.clock .date { letter-spacing: -0.25px; }
.count { width: 32px; height: 32px; margin-left: 23px; border-radius: 50%; background: #0078d4; color: #fff; font-size: 22px; font-weight: 400; display: flex; align-items: center; justify-content: center; }
```
